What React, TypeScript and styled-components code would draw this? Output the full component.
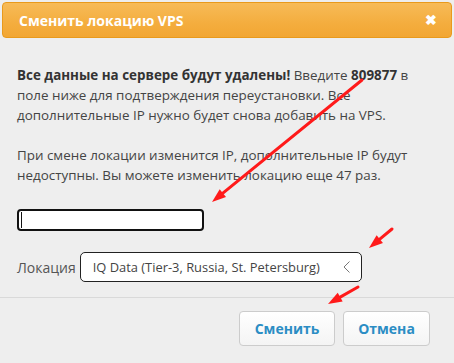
import * as React from 'react';
import styled, { createGlobalStyle } from 'styled-components';

const GlobalStyle = createGlobalStyle`
	html, body {
		margin: 0;
		padding: 0;
		background: #eeeeee;
	}
	body {
		font-family: 'Open Sans', 'Noto Sans', sans-serif;
	}
`;

const Dialog = styled.div`
	position: relative;
	width: 454px;
	height: 363px;
	box-sizing: border-box;
	background: #eeeeee;
	color: #444444;
	font-size: 13.4px;
	overflow: hidden;
`;

const Header = styled.div`
	display: flex;
	align-items: center;
	justify-content: space-between;
	box-sizing: border-box;
	margin: 2px 2px 0 2px;
	height: 36px;
	padding: 0 14px 0 16px;
	border: 1px solid #e99a1c;
	border-radius: 4px;
	background: linear-gradient(to bottom, #f7bb58 0%, #f4ad3e 60%, #f2a633 100%);
`;

const Title = styled.div`
	color: #ffffff;
	font-weight: bold;
	font-size: 14px;
`;

const CloseButton = styled.div`
	color: #ffffff;
	font-weight: bold;
	font-size: 14px;
	line-height: 1;
	cursor: pointer;
`;

const Body = styled.div`
	padding: 27px 17px 0 17px;
`;

const Paragraph = styled.p`
	margin: 0 0 20px 0;
	line-height: 20px;
	white-space: nowrap;

	b {
		color: #333333;
	}
`;

const CodeInput = styled.div`
	position: relative;
	box-sizing: border-box;
	width: 187px;
	height: 22px;
	margin-top: 24px;
	border: 2px solid #111111;
	border-radius: 4px;
	background: #ffffff;

	&::before {
		content: '';
		position: absolute;
		left: 2px;
		top: 1px;
		bottom: 1px;
		width: 1px;
		background: #111111;
	}
`;

const FieldRow = styled.div`
	display: flex;
	align-items: center;
	gap: 4px;
	margin-top: 21px;
`;

const FieldLabel = styled.span`
	color: #555555;
	font-size: 14px;
`;

const Select = styled.div`
	display: flex;
	align-items: center;
	justify-content: space-between;
	box-sizing: border-box;
	width: 282px;
	height: 30px;
	padding: 0 10px 0 12px;
	border: 1px solid #222222;
	border-radius: 5px;
	background: #ffffff;
	color: #444444;
	font-size: 12.9px;
`;

const Footer = styled.div`
	display: flex;
	justify-content: flex-end;
	gap: 8px;
	margin-top: 15px;
	padding: 13px 24px 0 0;
	border-top: 1px solid #d9d9d9;
`;

const Button = styled.button<{ wide?: boolean }>`
	box-sizing: border-box;
	width: ${props => props.wide ? '96px' : '87px'};
	height: 35px;
	border: 1px solid #cccccc;
	border-radius: 4px;
	background: linear-gradient(to bottom, #ffffff 0%, #f4f4f4 100%);
	color: #2b8dc4;
	font-family: inherit;
	font-weight: bold;
	font-size: 14px;
	cursor: pointer;
`;

const Overlay = styled.svg`
	position: absolute;
	left: 0;
	top: 0;
	pointer-events: none;
`;

const arrows = [
	{ x1: 362, y1: 80, x2: 212, y2: 202 },
	{ x1: 392, y1: 229, x2: 369, y2: 248 },
	{ x1: 358, y1: 287, x2: 328, y2: 304 },
];

function Arrow(props: { x1: number; y1: number; x2: number; y2: number }) {
	const { x1, y1, x2, y2 } = props;
	const angle = Math.atan2(y2 - y1, x2 - x1);
	const len = 14;
	const half = 5;
	const bx = x2 - Math.cos(angle) * len;
	const by = y2 - Math.sin(angle) * len;
	const px = -Math.sin(angle) * half;
	const py = Math.cos(angle) * half;
	return (
		<g>
			<line x1={x1} y1={y1} x2={bx} y2={by} stroke="#ff1a1a" strokeWidth={3} strokeLinecap="round" />
			<polygon points={`${x2},${y2} ${bx + px},${by + py} ${bx - px},${by - py}`} fill="#ff1a1a" />
		</g>
	);
}

export default function App() {
	return (
		<>
			<GlobalStyle />
			<Dialog>
				<Header>
					<Title>Сменить локацию VPS</Title>
					<CloseButton>✖</CloseButton>
				</Header>
				<Body>
					<Paragraph>
						<b>Все данные на сервере будут удалены!</b> Введите <b>809877</b> в<br />
						поле ниже для подтверждения переустановки. Все<br />
						дополнительные IP нужно будет снова добавить на VPS.
					</Paragraph>
					<Paragraph>
						При смене локации изменится IP, дополнительные IP будут<br />
						недоступны. Вы можете изменить локацию еще 47 раз.
					</Paragraph>
					<CodeInput />
					<FieldRow>
						<FieldLabel>Локация</FieldLabel>
						<Select>
							<span>IQ Data (Tier-3, Russia, St. Petersburg)</span>
							<svg width="8" height="12" viewBox="0 0 8 12">
								<polyline points="6.5,0.5 1,6 6.5,11.5" fill="none" stroke="#777777" strokeWidth={1} />
							</svg>
						</Select>
					</FieldRow>
				</Body>
				<Footer>
					<Button wide>Сменить</Button>
					<Button>Отмена</Button>
				</Footer>
				<Overlay width={454} height={363} viewBox="0 0 454 363">
					{arrows.map((a, i) => <Arrow key={i} {...a} />)}
				</Overlay>
			</Dialog>
		</>
	);
}
